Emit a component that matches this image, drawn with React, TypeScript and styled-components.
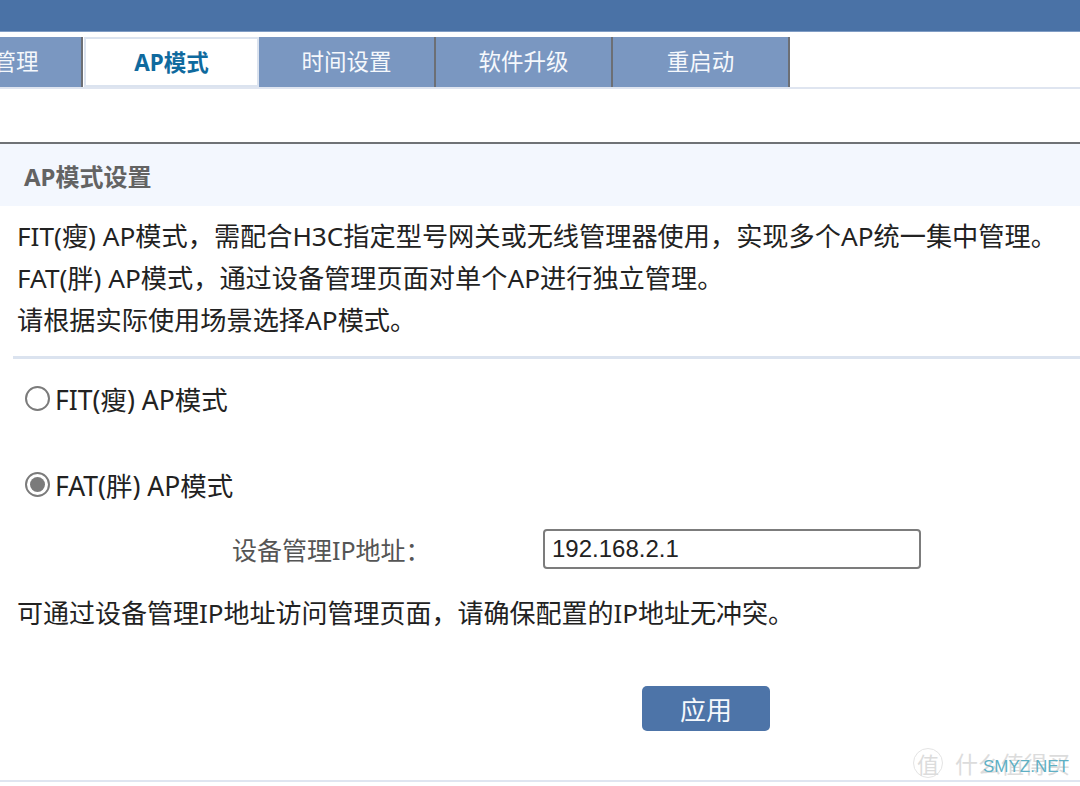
import styled, { createGlobalStyle } from 'styled-components';

const GlobalStyle = createGlobalStyle`
  html, body {
    margin: 0;
    padding: 0;
    background: #fff;
    overflow: hidden;
  }
  body {
    font-family: "Noto Sans", "Noto Sans CJK SC", sans-serif;
    color: #222;
  }
`;

const Page = styled.div`
  position: relative;
  width: 1080px;
  height: 786px;
  overflow: hidden;
`;

const TopBar = styled.header`
  height: 31px;
  background: #4a72a6;
  border-bottom: 1px solid #7f9cc4;
`;

const TabBar = styled.nav`
  display: flex;
  height: 50px;
  margin-top: 5px;
  margin-left: -94px;
  border-bottom: 2px solid #dfe5f0;
`;

const Tab = styled.div<{ $active?: boolean }>`
  width: 177px;
  height: 50px;
  box-sizing: border-box;
  display: flex;
  align-items: center;
  justify-content: center;
  padding-bottom: 4px;
  font-size: 22.5px;
  font-weight: ${({ $active }) => ($active ? 700 : 400)};
  color: ${({ $active }) => ($active ? '#0f6a9e' : '#f5f8fc')};
  background: ${({ $active }) => ($active ? '#fff' : '#7a97c1')};
  border-right: 2px solid #6c6f75;
  ${({ $active }) => $active && 'border: 2px solid #dbe3ef; margin-left: 1px; width: 175px; padding-bottom: 2px;'}
`;

const SectionHead = styled.h2`
  margin: 53px 0 0;
  height: 64px;
  box-sizing: border-box;
  border-top: 2px solid #6f7276;
  background: #f3f7fe;
  padding-left: 24px;
  display: flex;
  align-items: center;
  font-size: 24px;
  font-weight: 700;
  color: #636363;
`;

const Intro = styled.div`
  padding: 9px 0 15px 4px;
  border-bottom: 3px solid #dbe3ef;
  margin-left: 13px;
`;

const IntroLine = styled.p`
  margin: 0;
  height: 42px;
  line-height: 42px;
  font-size: 26.2px;
  white-space: nowrap;
`;

const RadioRow = styled.label<{ $gap: number }>`
  display: flex;
  align-items: flex-start;
  gap: 5px;
  height: 40px;
  line-height: 40px;
  margin: ${({ $gap }) => $gap}px 0 0 25px;
  font-size: 26.5px;
`;

const RadioMark = styled.span<{ $checked?: boolean }>`
  width: 25px;
  height: 25px;
  box-sizing: border-box;
  border-radius: 50%;
  border: 2px solid #7b7b7b;
  background: #fff;
  display: flex;
  align-items: center;
  justify-content: center;
  margin-top: 6px;

  &::after {
    content: '';
    display: ${({ $checked }) => ($checked ? 'block' : 'none')};
    width: 15px;
    height: 15px;
    border-radius: 50%;
    background: #7b7b7b;
  }
`;

const FieldRow = styled.div`
  display: flex;
  align-items: center;
  height: 40px;
  margin-top: 23px;
`;

const FieldLabel = styled.span`
  width: 543px;
  box-sizing: border-box;
  padding-left: 232px;
  font-size: 25px;
  color: #555;
`;

const IpBox = styled.div`
  width: 378px;
  height: 40px;
  box-sizing: border-box;
  border: 2px solid #7c7c7c;
  border-radius: 4px;
  padding-left: 7px;
  display: flex;
  align-items: center;
  font-family: "Liberation Sans", sans-serif;
  font-size: 24px;
  color: #222;
`;

const Note = styled.p`
  margin: 21px 0 0 17px;
  line-height: 46px;
  height: 46px;
  font-size: 26px;
  white-space: nowrap;
`;

const Actions = styled.div`
  display: flex;
  margin: 50px 0 0 642px;
`;

const ApplyButton = styled.button`
  width: 128px;
  height: 45px;
  border: 0;
  border-radius: 5px;
  background: #4d74a8;
  color: #f5f8fc;
  font-family: inherit;
  font-size: 26px;
  padding: 0;
`;

const FooterRule = styled.div`
  height: 2px;
  margin-top: 49px;
  background: #dfe5f0;
`;

const Watermark = styled.div`
  position: absolute;
  left: 913px;
  top: 746px;
  display: flex;
  align-items: center;
  gap: 12px;
  color: #dcdcdc;
  font-size: 23px;
  white-space: nowrap;
`;

const WatermarkSeal = styled.span`
  width: 28px;
  height: 28px;
  border: 1px solid #e4e4e4;
  border-radius: 50%;
  display: flex;
  align-items: center;
  justify-content: center;
  font-size: 22px;
`;

const SiteMark = styled.div`
  position: absolute;
  left: 983px;
  top: 757px;
  color: #5fb0c4;
  font-family: "Liberation Sans", sans-serif;
  font-size: 17px;
`;

const tabs = ['设备管理', 'AP模式', '时间设置', '软件升级', '重启动'];

export default function App() {
  return (
    <Page>
      <GlobalStyle />
      <TopBar />
      <TabBar>
        {tabs.map((tab) => (
          <Tab key={tab} $active={tab === 'AP模式'}>
            {tab}
          </Tab>
        ))}
      </TabBar>
      <SectionHead>AP模式设置</SectionHead>
      <Intro>
        <IntroLine>FIT(瘦) AP模式，需配合H3C指定型号网关或无线管理器使用，实现多个AP统一集中管理。</IntroLine>
        <IntroLine>FAT(胖) AP模式，通过设备管理页面对单个AP进行独立管理。</IntroLine>
        <IntroLine>请根据实际使用场景选择AP模式。</IntroLine>
      </Intro>
      <RadioRow $gap={21}>
        <RadioMark />
        FIT(瘦) AP模式
      </RadioRow>
      <RadioRow $gap={46}>
        <RadioMark $checked />
        FAT(胖) AP模式
      </RadioRow>
      <FieldRow>
        <FieldLabel>设备管理IP地址：</FieldLabel>
        <IpBox>192.168.2.1</IpBox>
      </FieldRow>
      <Note>可通过设备管理IP地址访问管理页面，请确保配置的IP地址无冲突。</Note>
      <Actions>
        <ApplyButton>应用</ApplyButton>
      </Actions>
      <FooterRule />
      <Watermark>
        <WatermarkSeal>值</WatermarkSeal>
        什么值得买
      </Watermark>
      <SiteMark>SMYZ.NET</SiteMark>
    </Page>
  );
}
